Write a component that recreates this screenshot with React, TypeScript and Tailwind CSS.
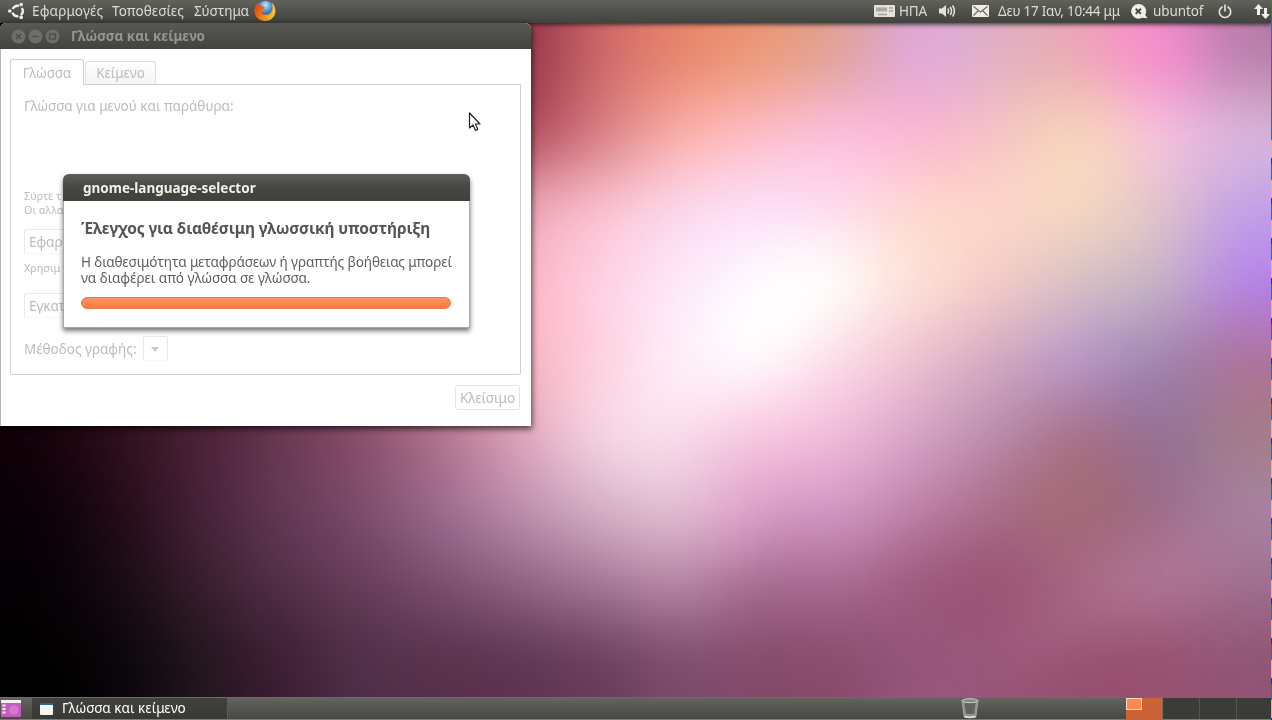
import type { ReactNode } from 'react'

// Wallpaper colours, one per 80x75 cell, blended by the blur filter
const wallpaper = [
  ['#100008', '#200812', '#3c1428', '#602840', '#803850', '#983c54', '#8c3048', '#d0686a', '#e88468', '#ec9874', '#dca294', '#dea8e4', '#deb0c0', '#eca8b0', '#fa8cd4', '#b47ca8'],
  ['#100008', '#200812', '#3c1428', '#602840', '#803850', '#983c54', '#a83c50', '#d67c80', '#ffb2a8', '#ffbec8', '#ffbee6', '#ffb2d2', '#f5c4c4', '#f8dcb4', '#fac2e4', '#dcbadc'],
  ['#100008', '#200812', '#3c1428', '#602840', '#803850', '#c07088', '#f0a8b8', '#fdc4d2', '#fcdaf0', '#fce0fe', '#fddcee', '#fed9c8', '#fdd6cc', '#fadcc0', '#e2c4c8', '#c0a0e8'],
  ['#100008', '#200812', '#3c1428', '#602840', '#804860', '#d090a8', '#fcb4c4', '#ffd2e6', '#fce8fc', '#ffffff', '#fffef8', '#ffe2d6', '#f7ccc6', '#d4c0c4', '#c8b8c4', '#b480f0'],
  ['#100008', '#280c18', '#44182c', '#683450', '#905470', '#d090a8', '#fcb4bc', '#ffd0e0', '#fff4fd', '#ffffff', '#ffdce8', '#f0c0d0', '#d0a8c0', '#b898d0', '#9a84b0', '#b07098'],
  ['#140008', '#30101c', '#4c2238', '#683850', '#8a4c68', '#b0708a', '#e0a4bc', '#fadcea', '#fce2f0', '#fcc8e0', '#f4bcdc', '#d4a4c8', '#b88cac', '#a8708a', '#90709a', '#a47c84'],
  ['#0a0006', '#220a16', '#48203a', '#643856', '#7c4c6c', '#9c6c90', '#c090b0', '#d8b4c8', '#e8c6d8', '#da9ac8', '#d49cc8', '#c080a8', '#aa6c88', '#a46a70', '#9a6888', '#a886a6'],
  ['#040004', '#180a14', '#381e2c', '#54304a', '#683c58', '#7c5070', '#906484', '#a87898', '#bc8cac', '#a4688e', '#ac6c94', '#9c587c', '#9a5476', '#a86884', '#b27696', '#a07090'],
  ['#000000', '#080408', '#22161e', '#3c1c32', '#50304a', '#58304a', '#5c3450', '#683c58', '#7c4c6c', '#844a6a', '#884a6a', '#985880', '#9a5678', '#964e6e', '#985070', '#905474'],
]

function Wallpaper() {
  const last = wallpaper.length - 1
  return (
    <svg className="absolute inset-0" width="1272" height="720" viewBox="0 0 1272 720">
      <defs>
        <filter id="blend" filterUnits="userSpaceOnUse" x="-200" y="-200" width="1680" height="1120" colorInterpolationFilters="sRGB">
          <feGaussianBlur stdDeviation="37 34" />
        </filter>
        <filter id="soft" filterUnits="userSpaceOnUse" x="-200" y="-200" width="1680" height="1120" colorInterpolationFilters="sRGB">
          <feGaussianBlur stdDeviation="26" />
        </filter>
      </defs>
      <g filter="url(#blend)">
        {wallpaper.map((row, r) =>
          row.map((fill, c) => {
            const x = c === 0 ? -200 : c * 80
            const y = r === 0 ? -200 : 20 + r * 75
            const right = c === 15 ? 1480 : (c + 1) * 80
            const bottom = r === last ? 920 : 20 + (r + 1) * 75
            return <rect key={`${r}-${c}`} x={x} y={y} width={right - x + 1} height={bottom - y + 1} fill={fill} />
          })
        )}
      </g>
      {/* diagonal light streaks */}
      <g filter="url(#soft)">
        <ellipse cx="785" cy="305" rx="75" ry="26" transform="rotate(-38 785 305)" fill="#fff" opacity="0.9" />
        <ellipse cx="1130" cy="590" rx="150" ry="16" transform="rotate(-28 1130 590)" fill="#b87c9c" opacity="0.5" />
        <ellipse cx="975" cy="585" rx="70" ry="24" transform="rotate(-28 975 585)" fill="#98506e" opacity="0.35" />
        <ellipse cx="1075" cy="475" rx="75" ry="28" transform="rotate(-28 1075 475)" fill="#a66c70" opacity="0.4" />
        <ellipse cx="735" cy="500" rx="18" ry="60" transform="rotate(-14 735 500)" fill="#eab0d4" opacity="0.4" />
        <ellipse cx="1140" cy="50" rx="50" ry="22" transform="rotate(25 1140 50)" fill="#fc86cc" opacity="0.35" />
      </g>
    </svg>
  )
}

function UbuntuIcon() {
  return (
    <svg width="18" height="18" viewBox="0 0 18 18" className="shrink-0">
      <circle cx="10.500" cy="9" r="5.200" fill="none" stroke="#f2f0ea" strokeWidth="2.400" strokeDasharray="7.290 3.600" strokeDashoffset="-1.800" transform="rotate(60 10.500 9)" />
      <circle cx="2.800" cy="9" r="1.800" fill="#f2f0ea" />
      <circle cx="14.200" cy="2.600" r="1.800" fill="#f2f0ea" />
      <circle cx="14.200" cy="15.400" r="1.800" fill="#f2f0ea" />
    </svg>
  )
}

function FirefoxIcon() {
  return (
    <svg width="22" height="22" viewBox="0 0 22 22" className="shrink-0">
      <defs>
        <radialGradient id="globe" cx="0.5" cy="0.25" r="0.75">
          <stop offset="0" stopColor="#c4eafc" />
          <stop offset="0.45" stopColor="#4a92d0" />
          <stop offset="1" stopColor="#123a7c" />
        </radialGradient>
        <linearGradient id="fox" x1="0" y1="0" x2="1" y2="0.6">
          <stop offset="0" stopColor="#d83a10" />
          <stop offset="0.5" stopColor="#f07018" />
          <stop offset="1" stopColor="#fcc030" />
        </linearGradient>
      </defs>
      <circle cx="11.5" cy="9.5" r="8.8" fill="url(#globe)" />
      <path d="M2.5 3C1 6 0 9 .5 12c.8 5.500 5 9 10.500 9 6.200 0 10.500-4.500 10.500-10.500 0-3.500-1.500-6.500-4-8.500 1.300 2.500 1.500 5 .8 7.500-1 3.600-3.500 5.500-6.800 5.300-2.200-.1-3.800-1.300-4.200-2.800 1.500.5 3 .1 4.200-1-1.200-.2-2-.8-2.300-1.800.2-1 1.500-1.200 1.800-2.200C9.500 6.500 8 6.500 7 5.500c-1.500-.3-3.300-.8-4.500-2.500z" fill="url(#fox)" />
      <path d="M18 3.500c2.500 3.500 2.800 8 .5 11.500 1-4 .8-8-.5-11.500z" fill="#ffe25a" />
    </svg>
  )
}

function KeyboardIcon() {
  return (
    <svg width="21" height="12" viewBox="0 0 21 12" className="shrink-0">
      <rect width="21" height="12" rx="1" fill="#e4e2da" />
      <path d="M2 2.500h11v4H2z" fill="#a9a8a1" />
      <path d="M15 3h4M15 6h4M4 9.500h9" stroke="#a4a39c" strokeWidth="1.300" />
    </svg>
  )
}

function VolumeIcon() {
  return (
    <svg width="17" height="14" viewBox="0 0 17 14" className="shrink-0" fill="none" stroke="#e6e3da" strokeWidth="1.500">
      <path d="M0 4.500h3L7 1v12L3 9.500H0z" fill="#e6e3da" stroke="none" />
      <path d="M8.800 4.500q1.600 2.500 0 5M11.200 3q2.600 4 0 8M13.600 1.500q3.600 5.500 0 11" />
    </svg>
  )
}

function MailIcon() {
  return (
    <svg width="17" height="12" viewBox="0 0 17 12" className="shrink-0">
      <rect width="17" height="12" rx="1" fill="#f0ede4" />
      <path d="M1.500 1.500l7 5.500 7-5.500M1.500 10.500l4.500-4.500M15.500 10.500L11 6" fill="none" stroke="#6a6962" strokeWidth="1.200" />
    </svg>
  )
}

function ChatIcon() {
  return (
    <svg width="17" height="15" viewBox="0 0 17 15" className="shrink-0">
      <path d="M7.300 0a7.300 7.300 0 1 0 3.500 13.800l5.700.5-2.300-3.500A7.300 7.300 0 0 0 7.300 0z" fill="#f2efe6" />
      <path d="M4.700 4.700l5.200 5.200M9.900 4.700l-5.200 5.200" stroke="#484843" strokeWidth="2" />
    </svg>
  )
}

function PowerIcon() {
  return (
    <svg width="14" height="15" viewBox="0 0 14 15" className="shrink-0" fill="none" stroke="#e6e3da" strokeWidth="1.600" strokeLinecap="round">
      <path d="M4 3a5.700 5.700 0 1 0 6 0M7 1v6" />
    </svg>
  )
}

function NetworkIcon() {
  return (
    <svg width="16" height="15" viewBox="0 0 16 15" className="shrink-0" fill="#f2efe6">
      <path d="M4.500 0L9 5H6v6H3V5H0zM11.500 15L7 10h3V4h3v6h3z" />
    </svg>
  )
}

function TrashIcon() {
  return (
    <svg width="18" height="21" viewBox="0 0 18 21" className="shrink-0">
      <path d="M1 2.500L3.200 19q5.800 2 11.600 0L17 2.500z" fill="#92928e" />
      <path d="M3.500 5L5 16h8l1.500-11z" fill="#62625f" />
      <path d="M1 2.500L3.200 19q5.800 2 11.600 0L17 2.500" fill="none" stroke="#a4a4a0" />
      <ellipse cx="9" cy="2.700" rx="8" ry="2" fill="#8a8a86" stroke="#cacac6" />
      <path d="M3.500 18.500q5.500 1.500 11 0" stroke="#e8e8e4" strokeWidth="1.500" fill="none" />
    </svg>
  )
}

function TopPanel() {
  return (
    <header className="relative flex h-[23px] shrink-0 items-center bg-linear-to-b from-[#62625c] via-[#51514c] to-[#42423e] pb-px pl-[7px] text-[13.500px] leading-[20px] whitespace-nowrap text-[#dfdbd2] shadow-[0_1px_5px_rgba(0,0,0,0.8)]">
      <UbuntuIcon />
      <span className="ml-[7px] w-[80px] tracking-[0.150px]">Εφαρμογές</span>
      <span className="w-[82px] tracking-[0.100px]">Τοποθεσίες</span>
      <span className="w-[60px] tracking-[-0.100px]">Σύστημα</span>
      <FirefoxIcon />
      <div className="ml-auto flex w-[398px] items-center">
        <KeyboardIcon />
        <span className="ml-[4px] w-[40px] tracking-[-0.200px]">ΗΠΑ</span>
        <VolumeIcon />
        <span className="ml-[16px] flex"><MailIcon /></span>
        <span className="ml-[9px] w-[133px] tracking-[-0.250px]">Δευ 17 Ιαν, 10:44 μμ</span>
        <ChatIcon />
        <span className="ml-[5px] w-[65px] tracking-[-0.100px]">ubuntof</span>
        <PowerIcon />
        <span className="ml-[22px] flex"><NetworkIcon /></span>
      </div>
    </header>
  )
}

function WindowButton({ children }: { children: ReactNode }) {
  return (
    <svg width="15" height="15" viewBox="0 0 15 15" fill="none" stroke="#484844" strokeWidth="1.200">
      <circle cx="7.500" cy="7.500" r="7" fill="#6e6e68" stroke="none" />
      {children}
    </svg>
  )
}

function SmallButton({ children }: { children: ReactNode }) {
  return (
    <div className="flex h-[25px] w-[60px] items-center rounded-l-[3px] border border-r-0 border-[#e8e8e6] border-b-[#f8f8f6] pt-px pl-[4px] text-[13.500px] tracking-[-0.100px]">
      {children}
    </div>
  )
}

function LanguageWindow() {
  return (
    <section className="absolute top-0 left-0 h-[403px] w-[531px] rounded-t-[6px] border-l border-[#b8b8b6] bg-white text-[13.500px] text-[#bcbcb9] shadow-[0_2px_6px_1px_rgba(0,0,0,0.65)]">
      <div className="-ml-px flex h-[26px] items-center rounded-t-[6px] bg-linear-to-b from-[#595954] to-[#42423e] pl-[11px] font-bold text-[#96958e]">
        <div className="flex gap-[2px]">
          <WindowButton><path d="M5 5l5 5M10 5l-5 5" /></WindowButton>
          <WindowButton><path d="M4.500 7.500h6" /></WindowButton>
          <WindowButton><rect x="4.500" y="5" width="6" height="5" /></WindowButton>
        </div>
        <span className="ml-[11px] pt-px text-[13.500px]">Γλώσσα και κείμενο</span>
      </div>
      <div className="px-[9px] pt-[10px]">
        <div className="relative z-10 -mb-px flex items-end gap-px">
          <div className="flex h-[26px] w-[74px] items-center justify-center rounded-t-[3px] border border-b-0 border-[#cfcfcd] bg-white pt-px">Γλώσσα</div>
          <div className="mb-px flex h-[23px] w-[71px] items-center justify-center rounded-t-[3px] border border-b-0 border-[#e0e0de] bg-linear-to-b from-white to-[#f4f4f1] pt-px">Κείμενο</div>
        </div>
        <div className="flex h-[291px] w-[511px] flex-col rounded-b-[2px] border border-[#d2d2d0] pt-[11px] pl-[13px]">
          <p className="leading-5">Γλώσσα για μενού και παράθυρα:</p>
          <p className="mt-[73px] text-[10.800px] leading-[14px] whitespace-nowrap">
            Σύρτε τ
            <br />
            Οι αλλα
          </p>
          <div className="mt-3">
            <SmallButton>Εφαρ</SmallButton>
          </div>
          <p className="mt-[7px] text-[10.800px] leading-[14px] whitespace-nowrap">Χρησιμ</p>
          <div className="mt-[18px]">
            <SmallButton>Εγκατ</SmallButton>
          </div>
          <div className="mt-[18px] flex items-center gap-[6px]">
            <span className="pt-px">Μέθοδος γραφής:</span>
            <span className="flex h-[25px] w-[25px] items-center justify-center rounded-[3px] border border-[#e8e8e6] border-b-[#f8f8f6] pt-px">
              <svg width="8" height="5" viewBox="0 0 8 5"><path d="M0 0h8L4 5z" fill="#cacac8" /></svg>
            </span>
          </div>
        </div>
        <div className="mt-[10px] flex w-[510px] justify-end">
          <div className="flex h-[25px] w-[65px] items-center justify-center rounded-[3px] border border-[#e4e4e2] pt-px">Κλείσιμο</div>
        </div>
      </div>
    </section>
  )
}

function ProgressDialog() {
  return (
    <section className="absolute top-[151px] left-[63px] h-[154px] w-[407px] rounded-t-[6px] border-x border-b border-[#a8a8a6] bg-white shadow-[0_3px_5px_0_rgba(0,0,0,0.55)]">
      <div className="-mx-px flex h-[27px] items-center rounded-t-[6px] bg-linear-to-b from-[#5f5f5a] via-[#464642] to-[#40403c] pt-px pl-[20px] text-[13.500px] font-bold text-[#f2f0ea]">
        gnome-language-selector
      </div>
      <div className="pt-[15px] pl-[17px] text-[#5e5e5c]">
        <h1 className="text-[15.500px] leading-6 font-bold tracking-[-0.120px] whitespace-nowrap text-[#545452]">Έλεγχος για διαθέσιμη γλωσσική υποστήριξη</h1>
        <p className="mt-[14px] text-[13.500px] leading-4 tracking-[-0.080px] whitespace-nowrap">
          Η διαθεσιμότητα μεταφράσεων ή γραπτής βοήθειας μπορεί
          <br />
          <span className="tracking-[0.010px]">να διαφέρει από γλώσσα σε γλώσσα.</span>
        </p>
        <div className="mt-[11px] h-[12px] w-[370px] rounded-full border border-[#e47a48] bg-linear-to-b from-[#ff9360] to-[#fb7840]" />
      </div>
    </section>
  )
}

function MousePointer() {
  return (
    <svg className="absolute top-[89px] left-[468px]" width="13" height="20" viewBox="0 0 13 20">
      <path d="M1.500 1v15l3.500-3 2.500 5.500 2.300-1L7.500 12H12z" fill="#fff" stroke="#222" strokeWidth="1.200" strokeLinejoin="round" />
    </svg>
  )
}

function BottomPanel() {
  return (
    <footer className="relative flex h-[22px] shrink-0 items-stretch border-t border-[#6c6c66] bg-linear-to-b from-[#64645e] to-[#474743] text-[13.500px] text-white">
      <div className="flex w-[32px] items-center pl-px">
        <svg width="20" height="17" viewBox="0 0 20 17">
          <rect width="20" height="17" rx="1" fill="#c45cc0" />
          <ellipse cx="13" cy="10" rx="5" ry="4.500" fill="#d478ce" />
          <path d="M0 1.500h20" stroke="#f6eef4" strokeWidth="3" />
          <path d="M1.500 5.500h3M1.500 9h3M1.500 12.500h3" stroke="#f6eef4" strokeWidth="2" />
        </svg>
      </div>
      <div className="flex w-[196px] items-center border-r border-[#5e5e58] bg-linear-to-b from-[#42423e] to-[#383835] pl-[8px]">
        <svg width="13" height="12" viewBox="0 0 13 12">
          <rect width="13" height="12" rx="1" fill="#f4f4f4" />
          <path d="M0 1h13" stroke="#3a5f96" strokeWidth="2" />
        </svg>
        <span className="ml-[9px] tracking-[0.030px]">Γλώσσα και κείμενο</span>
      </div>
      <div className="ml-auto flex w-[311px] items-stretch">
        <div className="flex items-center"><TrashIcon /></div>
        <div className="ml-auto flex w-[146px] bg-[#3b3b38]">
          <div className="w-[37px] border-r border-[#7a6a60] bg-[#cb6336]">
            <div className="h-[12px] w-[16px] border border-[#ffd9c4] bg-[#ff8850]" />
          </div>
          <div className="w-[37px] border-r border-[#555550]" />
          <div className="w-[37px] border-r border-[#555550]" />
        </div>
      </div>
    </footer>
  )
}

export default function App() {
  return (
    <div className="relative flex h-[720px] w-[1272px] flex-col overflow-hidden bg-black font-['Noto_Sans','Open_Sans',sans-serif]">
      <Wallpaper />
      <TopPanel />
      <main className="relative grow">
        <LanguageWindow />
        <ProgressDialog />
        <MousePointer />
      </main>
      <BottomPanel />
      <div className="relative h-px shrink-0 bg-[#7c7c76]" />
      {/* green and yellow noise line down the right edge */}
      <div className="absolute inset-y-0 right-0 flex w-px flex-col">
        <div className="h-[140px] bg-[#2f8a08]" />
        <div className="grow bg-[repeating-linear-gradient(180deg,#d8d800_0_18px,#1d5200_18px_24px,#2f8a08_24px_40px)]" />
      </div>
    </div>
  )
}
